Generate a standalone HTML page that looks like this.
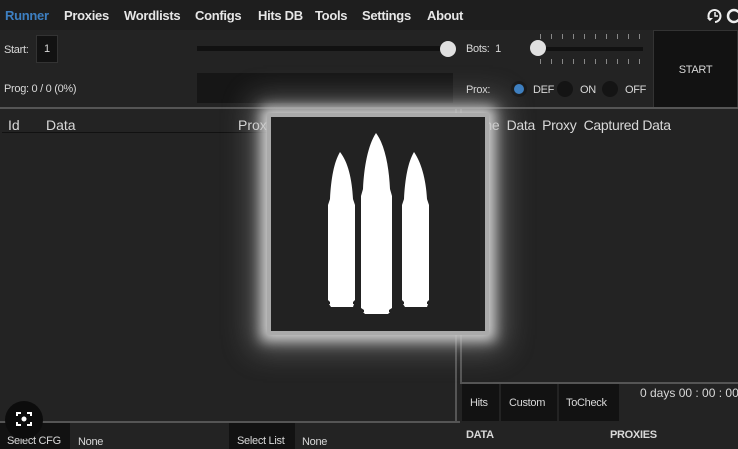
<!DOCTYPE html>
<html><head><meta charset="utf-8"><style>
*{margin:0;padding:0;box-sizing:border-box}
body{width:738px;height:449px;overflow:hidden;background:#232323;font-family:"Liberation Sans Narrow","Liberation Sans",sans-serif;color:#d8d8d8;position:relative}
.a{position:absolute;white-space:nowrap}
.menu{font-weight:bold;font-size:13px;top:8px;color:#e6e6e6;letter-spacing:-0.3px}
.dark{background:#121212}
.line{background:#555}
.s{font-size:11px;letter-spacing:-0.3px}
</style></head><body>
<div class="a" style="left:0;top:0;width:738px;height:30px;background:#1e1e1e"></div>
<div class="a menu" style="left:5px;color:#3d7fc1">Runner</div>
<div class="a menu" style="left:64px">Proxies</div>
<div class="a menu" style="left:124px">Wordlists</div>
<div class="a menu" style="left:195px">Configs</div>
<div class="a menu" style="left:258px">Hits DB</div>
<div class="a menu" style="left:315px">Tools</div>
<div class="a menu" style="left:362px">Settings</div>
<div class="a menu" style="left:427px">About</div>
<svg class="a" style="left:704px;top:5px" width="34" height="22"><path d="M6 15A6 6 0 1 1 11 17" fill="none" stroke="#eee" stroke-width="2"/><path d="M3 13l3 3 3-3" fill="#eee"/><path d="M11 7v4h3" stroke="#eee" stroke-width="1.5" fill="none"/><circle cx="30" cy="11" r="6" fill="none" stroke="#eee" stroke-width="2.5"/></svg>

<div class="a s" style="left:4px;top:44px">Start:</div>
<div class="a dark s" style="left:36px;top:35px;width:22px;height:28px;border:1px solid #333;padding:7px 0 0 7px">1</div>
<div class="a s" style="left:4px;top:83px">Prog: 0 / 0 (0%)</div>
<div class="a" style="left:197px;top:46px;width:250px;height:5px;background:#111"></div>
<div class="a" style="left:440px;top:41px;width:16px;height:16px;border-radius:50%;background:#e0e0e0"></div>
<div class="a" style="left:197px;top:73px;width:256px;height:30px;background:#161616"></div>
<div class="a s" style="left:466px;top:43px">Bots:&nbsp; 1</div>
<div class="a" style="left:535px;top:47px;width:108px;height:4px;background:#111"></div>
<div class="a" style="left:530px;top:40px;width:16px;height:16px;border-radius:50%;background:#e0e0e0"></div>
<div class="a" style="left:540px;top:34px;width:100px;height:5px;background:repeating-linear-gradient(90deg,#888 0 1px,transparent 1px 11px)"></div>
<div class="a" style="left:540px;top:59px;width:100px;height:5px;background:repeating-linear-gradient(90deg,#888 0 1px,transparent 1px 11px)"></div>
<div class="a s" style="left:466px;top:84px">Prox:</div>
<div class="a" style="left:511px;top:81px;width:16px;height:16px;border-radius:50%;background:#3d7fc1;border:3px solid #1a1a1a"></div>
<div class="a s" style="left:533px;top:84px">DEF</div>
<div class="a" style="left:557px;top:81px;width:16px;height:16px;border-radius:50%;background:#141414"></div>
<div class="a s" style="left:580px;top:84px">ON</div>
<div class="a" style="left:602px;top:81px;width:16px;height:16px;border-radius:50%;background:#141414"></div>
<div class="a s" style="left:625px;top:84px">OFF</div>
<div class="a dark s" style="left:653px;top:30px;width:85px;height:78px;border:1px solid #333;text-align:center;padding-top:33px">START</div>

<div class="a line" style="left:0;top:107px;width:738px;height:2px"></div>
<div class="a" style="left:8px;top:117px;font-size:14px;font-family:'Liberation Sans',sans-serif">Id</div>
<div class="a" style="left:46px;top:117px;font-size:14px;font-family:'Liberation Sans',sans-serif">Data</div>
<div class="a" style="left:238px;top:117px;font-size:14px;font-family:'Liberation Sans',sans-serif">Proxy</div>
<div class="a" style="left:2px;top:132px;width:454px;height:1px;background:#111"></div>
<div class="a" style="left:470px;top:117px;font-size:14px;font-family:'Liberation Sans',sans-serif;letter-spacing:-0.3px">Time&nbsp; Data&nbsp; Proxy&nbsp; Captured Data</div>
<div class="a line" style="left:455px;top:108px;width:2px;height:313px"></div>
<div class="a line" style="left:460px;top:108px;width:2px;height:276px"></div>
<div class="a line" style="left:462px;top:382px;width:276px;height:2px"></div>
<div class="a line" style="left:0;top:421px;width:460px;height:2px"></div>
<div class="a dark s" style="left:462px;top:384px;width:37px;height:37px;padding:13px 0 0 8px">Hits</div>
<div class="a dark s" style="left:501px;top:384px;width:56px;height:37px;padding:13px 0 0 8px">Custom</div>
<div class="a dark s" style="left:559px;top:384px;width:60px;height:37px;padding:13px 0 0 7px">ToCheck</div>
<div class="a" style="left:640px;top:386px;font-size:12px">0 days 00 : 00 : 00</div>
<div class="a dark s" style="left:0;top:423px;width:70px;height:26px;padding:12px 0 0 7px">Select CFG</div>
<div class="a s" style="left:78px;top:436px">None</div>
<div class="a dark s" style="left:229px;top:423px;width:66px;height:26px;padding:12px 0 0 8px">Select List</div>
<div class="a s" style="left:302px;top:436px">None</div>
<div class="a s" style="left:466px;top:429px;font-weight:bold">DATA</div>
<div class="a s" style="left:610px;top:429px;font-weight:bold">PROXIES</div>
<div class="a" style="left:5px;top:401px;width:38px;height:38px;border-radius:50%;background:#0c0c0c"></div>
<svg class="a" style="left:14px;top:409px" width="20" height="20"><path d="M3 7V4h4M13 4h4v3M17 13v3h-4M7 16H3v-3" stroke="#fff" stroke-width="2" fill="none"/><circle cx="10" cy="10" r="2.5" fill="#fff"/></svg>

<div class="a" style="left:271px;top:117px;width:214px;height:214px;background:#222;box-shadow:0 0 0 4px #aaa,0 0 12px 10px #ccc,0 0 28px 18px rgba(180,180,180,.45)"></div>
<svg class="a" style="left:271px;top:117px" width="214" height="214">
<g fill="#fff">
<path d="M69 35C63 45 60 62 59 82L57 88V183L59 185V187H82V185L84 183V88L82 82C81 62 77 45 69 35Z"/>
<path d="M58 187H83L82 190H60Z"/>
<path d="M105 16C97 28 93 50 92 72L90 79V191L93 193V195H118V193L121 191V79L119 72C118 50 114 28 105 16Z"/>
<path d="M92 195H119L117 197H94Z"/>
<path d="M143 35C137 45 134 62 133 82L131 88V183L133 185V187H156V185L158 183V88L156 82C155 62 150 45 143 35Z"/>
<path d="M132 187H157L156 190H134Z"/>
</g></svg>
</body></html>
